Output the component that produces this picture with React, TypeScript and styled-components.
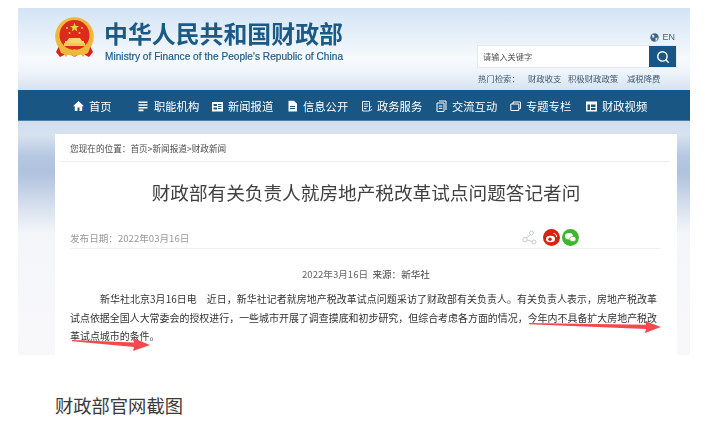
import React from "react";
import styled, { createGlobalStyle } from "styled-components";
import { Search } from "lucide-react";

const Global = createGlobalStyle`
  html, body { margin: 0; padding: 0; background: #fff; }
  body { font-family: "Noto Sans CJK SC", "Liberation Sans", sans-serif; width: 711px; height: 436px; overflow: hidden; }
`;
const Page = styled.div`position: relative; width: 711px; height: 436px; background: #fff; padding: 8px 0 0 18px; box-sizing: border-box; overflow: hidden;`;
const Shot = styled.div`width: 672px; height: 347px; display: flex; flex-direction: column; filter: blur(0.35px);`;
const Header = styled.header`
  flex: none; height: 82px; display: flex; justify-content: space-between; padding: 0 14px 0 37px; box-sizing: border-box;
  background: linear-gradient(180deg, #d3e4f5 0%, #e4eef9 30%, #f7fafd 62%, #eef4fa 78%, #d7e3ef 100%);
`;
const Brand = styled.div`display: flex; align-items: flex-start; gap: 10px; padding-top: 9px;`;
const BrandText = styled.div`display: flex; flex-direction: column;`;
const CnName = styled.div`font-size: 23.9px; line-height: 30px; font-weight: 700; color: #1b5a87; white-space: nowrap; margin-top: 1px;`;
const EnName = styled.div`font-family: "Liberation Sans", sans-serif; font-size: 10.1px; letter-spacing: 0.03px; line-height: 13px; font-weight: 400; color: #1f5c8a; margin: 2px 0 0 1px; white-space: nowrap; -webkit-text-stroke: 0.2px #1f5c8a;`;
const Tools = styled.div`width: 198px; display: flex; flex-direction: column; padding-top: 23px;`;
const Lang = styled.div`display: flex; justify-content: flex-end; align-items: center; gap: 3px; height: 12px; font-family: "Liberation Sans", sans-serif; font-size: 9px; color: #44617c; padding-right: 1px;`;
const SearchBox = styled.div`display: flex; height: 21px; margin-top: 3px; background: #fff; box-shadow: 0 0 0 1px #e4e9ee;`;
const SearchText = styled.div`flex: 1; font-size: 8.2px; line-height: 21px; padding-left: 5px; color: #555;`;
const SearchBtn = styled.div`width: 27px; background: #1a5684; color: #fff; display: flex; align-items: center; justify-content: center;`;
const Hot = styled.div`display: flex; margin-top: 5px; font-size: 8.4px; line-height: 12px; color: #3f5a75; white-space: nowrap;`;
const HotLink = styled.span<{ $w: number }>`width: ${(p) => p.$w}px; flex: none;`;
const Nav = styled.nav`flex: none; height: 31px; background: #1a5684; display: flex; align-items: center; padding-left: 55px; box-sizing: border-box; box-shadow: inset 0 -1px 0 #4f7ea3;`;
const NavItem = styled.div<{ $w: number }>`width: ${(p) => p.$w}px; flex: none; display: flex; align-items: center; gap: 5px; color: #fff; font-size: 11.3px; line-height: 14px; white-space: nowrap;`;
const Main = styled.main`
  flex: 1; min-height: 0; padding: 13px 13px 0 37px; overflow: hidden;
  background:
    linear-gradient(180deg, rgba(255,255,255,0) 0%, rgba(255,255,255,0) 22%, rgba(247,248,251,.95) 48%, rgba(248,248,250,1) 100%),
    linear-gradient(180deg, #d1deee 0%, #d7e2f0 6%, #b5c7e1 15%, #aec1dd 24%, #c9d5e8 100%);
`;
const Card = styled.article`height: 221px; background: #fff; display: flex; flex-direction: column;`;
const Crumb = styled.div`flex: none; height: 28px; margin: 0 7px 0 6px; padding-left: 9px; border-bottom: 1px solid #ecedef; font-size: 8.65px; line-height: 29px; color: #4a4a4a; white-space: nowrap; box-sizing: border-box;`;
const Title = styled.h1`flex: none; margin: 0; height: 60px; font-size: 18.65px; line-height: 60px; font-weight: 400; color: #414141; text-align: center; white-space: nowrap;`;
const Meta = styled.div`flex: none; height: 27px; margin: 0 16px 0 15px; display: flex; justify-content: space-between; align-items: center; border-bottom: 1px solid #f0f0f2; padding-top: 5px; box-sizing: border-box; font-size: 9.6px; color: #9a9a9a;`;
const Share = styled.div`display: flex; align-items: center; gap: 2px; padding-right: 82px;`;
const Byline = styled.div`flex: none; margin-top: 16px; height: 18px; font-size: 9.6px; line-height: 18px; text-align: center; color: #666; white-space: pre;`;
const Source = styled.span`color: #444;`;
const Body = styled.p`flex: none; margin: 7px 20px 0 15px; font-size: 9.95px; line-height: 18.5px; color: #333; text-indent: 30px; text-align: justify;`;
const Caption = styled.div`margin: 38px 0 0 37px; font-size: 18.3px; line-height: 24px; color: #3a3a3a;`;
const Arrows = styled.svg`position: absolute; left: 0; top: 0; width: 711px; height: 436px; pointer-events: none;`;

const Ic = styled.svg`width: 11px; height: 12px; flex: none; display: block;`;

const Emblem = () => (
  <svg width="39" height="41" viewBox="0 0 39 41">
    <path d="M5 27 L1 35 L5 40 L13 36 L19.5 40 L26 36 L34 40 L38 35 L34 27 Z" fill="#d8231c" />
    <circle cx="19.5" cy="19.5" r="19.3" fill="#efb83c" />
    <circle cx="19.5" cy="18" r="15" fill="#dd2a1c" />
    <path d="M19.5 5.5l1.2 3.4h3.5l-2.8 2.2 1 3.4-2.9-2-2.9 2 1-3.4-2.8-2.2h3.5z" fill="#f7d23e" />
    <circle cx="12" cy="11" r="1" fill="#f7d23e" /><circle cx="27" cy="11" r="1" fill="#f7d23e" />
    <circle cx="14.5" cy="16" r="1" fill="#f7d23e" /><circle cx="24.5" cy="16" r="1" fill="#f7d23e" />
    <path d="M10 26h19v-2h-2l-2-3h-11l-2 3h-2z" fill="#f6d66a" />
    <rect x="9" y="26" width="21" height="3" fill="#f3c94d" />
    <path d="M4 31 Q12 37 19.5 32 Q27 37 35 31 L33 36 Q26 40 19.5 35 Q13 40 6 36 Z" fill="#f0b93c" />
    <path d="M8 36h6l-3 4zM25 36h6l-3 4zM16 36h7l-3.500 4z" fill="#efb83c" />
  </svg>
);

const icons = {
  home: <path d="M5.500 1L0 6.200h1.800V11h2.700V7.500h2V11h2.700V6.200H11z" fill="#fff" />,
  list: <path d="M.5 1.500h9v1.600H.5zM.5 4.200h9v1.600H.5zM.5 6.900h9v1.600H.5zM.5 9.600h5v1.600H.5z" fill="#fff" />,
  news: <path d="M0 2h11v9.500H0zM1.500 4v2h3.500V4zM6 4v1h3.500V4zM6 6v1h3.500V6zM1.500 7.500v2h3.500v-2zM6 8v1h3.500V8z" fill="#fff" fillRule="evenodd" />,
  doc: <path d="M1.500 .8h5.500l3 3v7.700h-8.500zM3 6v1h5V6zM3 8v1h5V8z" fill="#fff" fillRule="evenodd" />,
  gov: <path d="M1.500 1.500h7v9.500h-7zM3 4h4M3 6.300h4M3 8.500h2.500M8.500 8l2-2M9.500 11l1.500-2" fill="none" stroke="#fff" strokeWidth=".9" />,
  talk: <path d="M3 1h7v9M1 3h7v8.500H1zM2.800 6h3.500M2.800 8.300h3.500" fill="none" stroke="#fff" strokeWidth="1" />,
  topic: <path d="M.8 4h8v6.500h-8zM3 4V2h7.500v6.500H9" fill="none" stroke="#fff" strokeWidth="1" />,
  video: <path d="M0 1.500h11v10H0zM1.500 4.500v5.500h2.500V4.500zM5 4.500V7h4.500V4.500zM5 8v2h4.500V8z" fill="#fff" fillRule="evenodd" />,
};

const navs: [keyof typeof icons, string, number][] = [
  ["home", "首页", 65], ["list", "职能机构", 74], ["news", "新闻报道", 75], ["doc", "信息公开", 74],
  ["gov", "政务服务", 75], ["talk", "交流互动", 74], ["topic", "专题专栏", 76], ["video", "财政视频", 75],
];

export default function App() {
  return (
    <Page>
      <Global />
      <Shot>
        <Header>
          <Brand>
            <Emblem />
            <BrandText>
              <CnName>中华人民共和国财政部</CnName>
              <EnName>Ministry of Finance of the People's Republic of China</EnName>
            </BrandText>
          </Brand>
          <Tools>
            <Lang>
              <svg width="9" height="9" viewBox="0 0 9 9">
                <circle cx="4.500" cy="4.500" r="4.200" fill="#3f6385" />
                <path d="M2 1.500l2 .5 .5 2-2 1zM5.500 5l2-.5-.5 3-1.500 .5z" fill="#dfe8ef" />
              </svg>
              EN
            </Lang>
            <SearchBox>
              <SearchText>请输入关键字</SearchText>
              <SearchBtn><Search size={14} strokeWidth={2.4} /></SearchBtn>
            </SearchBox>
            <Hot>
              <HotLink $w={50}>热门检索：</HotLink>
              <HotLink $w={40}>财政收支</HotLink>
              <HotLink $w={59}>积极财政政策</HotLink>
              <HotLink $w={40}>减税降费</HotLink>
            </Hot>
          </Tools>
        </Header>
        <Nav>
          {navs.map(([k, t, w]) => (
            <NavItem key={t} $w={w}>
              <Ic viewBox="0 0 11 12">{icons[k]}</Ic>
              {t}
            </NavItem>
          ))}
        </Nav>
        <Main>
          <Card>
            <Crumb>您现在的位置：首页&gt;新闻报道&gt;财政新闻</Crumb>
            <Title>财政部有关负责人就房地产税改革试点问题答记者问</Title>
            <Meta>
              <span>发布日期：2022年03月16日</span>
              <Share>
                <svg width="15" height="15" viewBox="0 0 15 15" style={{ marginRight: 4 }}>
                  <g fill="none" stroke="#c9c9c9" strokeWidth="1">
                    <circle cx="9.500" cy="3" r="2" /><circle cx="3" cy="9.500" r="2.300" /><circle cx="12" cy="12" r="2" />
                    <path d="M8.500 4.700L4.500 8M5.300 10L10 11.500" />
                  </g>
                </svg>
                <svg width="17" height="17" viewBox="0 0 17 17">
                  <circle cx="8.500" cy="8.500" r="8.500" fill="#d9220f" />
                  <ellipse cx="7.500" cy="10" rx="4.500" ry="3.300" fill="#fff" />
                  <circle cx="7" cy="10.200" r="1.800" fill="#d9220f" />
                  <path d="M10.500 4.500a3 3 0 0 1 3 3.500" fill="none" stroke="#fff" strokeWidth="1" />
                </svg>
                <svg width="17" height="17" viewBox="0 0 17 17">
                  <circle cx="8.500" cy="8.500" r="8.500" fill="#3db52e" />
                  <ellipse cx="7" cy="7.300" rx="4" ry="3.200" fill="#fff" />
                  <ellipse cx="10.800" cy="10" rx="3.200" ry="2.600" fill="#fff" stroke="#3db52e" strokeWidth=".6" />
                </svg>
              </Share>
            </Meta>
            <Byline>2022年3月16日  <Source>来源：新华社</Source></Byline>
            <Body>
              新华社北京3月16日电　近日，新华社记者就房地产税改革试点问题采访了财政部有关负责人。有关负责人表示，房地产税改革试点依据全国人大常委会的授权进行，一些城市开展了调查摸底和初步研究，但综合考虑各方面的情况，今年内不具备扩大房地产税改革试点城市的条件。
            </Body>
          </Card>
        </Main>
      </Shot>
      <Caption>财政部官网截图</Caption>
      <Arrows viewBox="0 0 711 436">
        <path d="M529 323L646 324.800L645 321L661 327L645 333L646 329L529 324.200Z" fill="#f4494f" />
        <path d="M72 340L134 342.500L133 338L150 345L133 351L134 347L72 341.200Z" fill="#f4494f" />
      </Arrows>
    </Page>
  );
}
